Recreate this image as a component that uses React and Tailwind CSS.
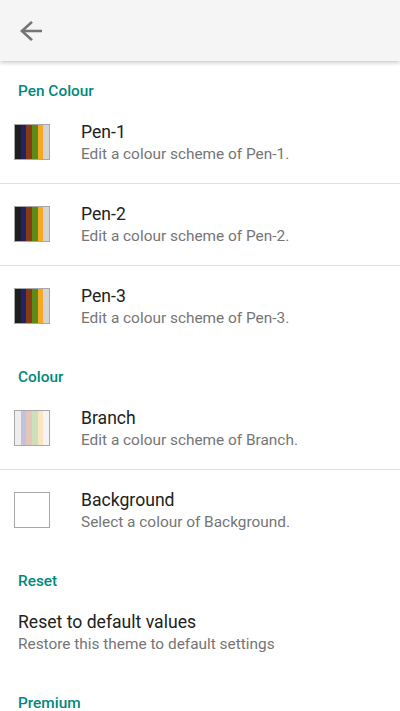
import React from "react";

const penColors = ["#1e1e1e", "#20226a", "#8a3a12", "#5c8c18", "#f6a824", "#d4d4d4"];
const branchColors = ["#eeeeee", "#c1c3de", "#e4c5b7", "#cde0bc", "#fbe4c0", "#f4f4f4"];

function Swatch({ colors }) {
  return (
    <div className="w-[36px] h-[36px] border border-[#a8a8a8] flex shrink-0">
      {colors ? (
        colors.map((c, i) => <div key={i} className="flex-1 h-full" style={{ backgroundColor: c }} />)
      ) : (
        <div className="flex-1 bg-white" />
      )}
    </div>
  );
}

function Category({ children }) {
  return (
    <div className="h-[41px] pt-[20px] pl-[18px] text-[15.4px] leading-[20px] font-medium text-[#00897b]">
      {children}
    </div>
  );
}

function Row({ colors, title, subtitle, icon = true, noSwatchColors }) {
  return (
    <div className="h-[81px] flex items-start">
      {icon && (
        <div className="w-[81px] pl-[14px] pt-[22px] shrink-0">
          <Swatch colors={noSwatchColors ? null : colors} />
        </div>
      )}
      <div className={`pt-[18px] ${icon ? "" : "pl-[18px]"}`}>
        <div className="text-[17.6px] leading-[24px] text-[#212121]">{title}</div>
        <div className="text-[15.4px] leading-[21px] text-[#757575]">{subtitle}</div>
      </div>
    </div>
  );
}

function Divider() {
  return <div className="h-px bg-[#e0e0e0]" />;
}

export default function App() {
  return (
    <div className="w-[400px] h-[711px] overflow-hidden bg-white" style={{ fontFamily: "Roboto, 'Noto Sans', sans-serif" }}>
      <div className="h-[61px] bg-[#f5f5f5] flex items-center pl-[20px] shadow-[0_2px_4px_rgba(0,0,0,0.2)] relative z-10">
        <svg width="22" height="20" viewBox="4 4 16 16" preserveAspectRatio="none">
          <path d="M20 11H7.83l5.59-5.59L12 4l-8 8 8 8 1.41-1.41L7.83 13H20v-2z" fill="#757575" />
        </svg>
      </div>
      <Category>Pen Colour</Category>
      <Row colors={penColors} title="Pen-1" subtitle="Edit a colour scheme of Pen-1." />
      <Divider />
      <Row colors={penColors} title="Pen-2" subtitle="Edit a colour scheme of Pen-2." />
      <Divider />
      <Row colors={penColors} title="Pen-3" subtitle="Edit a colour scheme of Pen-3." />
      <Category>Colour</Category>
      <Row colors={branchColors} title="Branch" subtitle="Edit a colour scheme of Branch." />
      <Divider />
      <Row noSwatchColors title="Background" subtitle="Select a colour of Background." />
      <Category>Reset</Category>
      <Row icon={false} title="Reset to default values" subtitle="Restore this theme to default settings" />
      <Category>Premium</Category>
    </div>
  );
}
